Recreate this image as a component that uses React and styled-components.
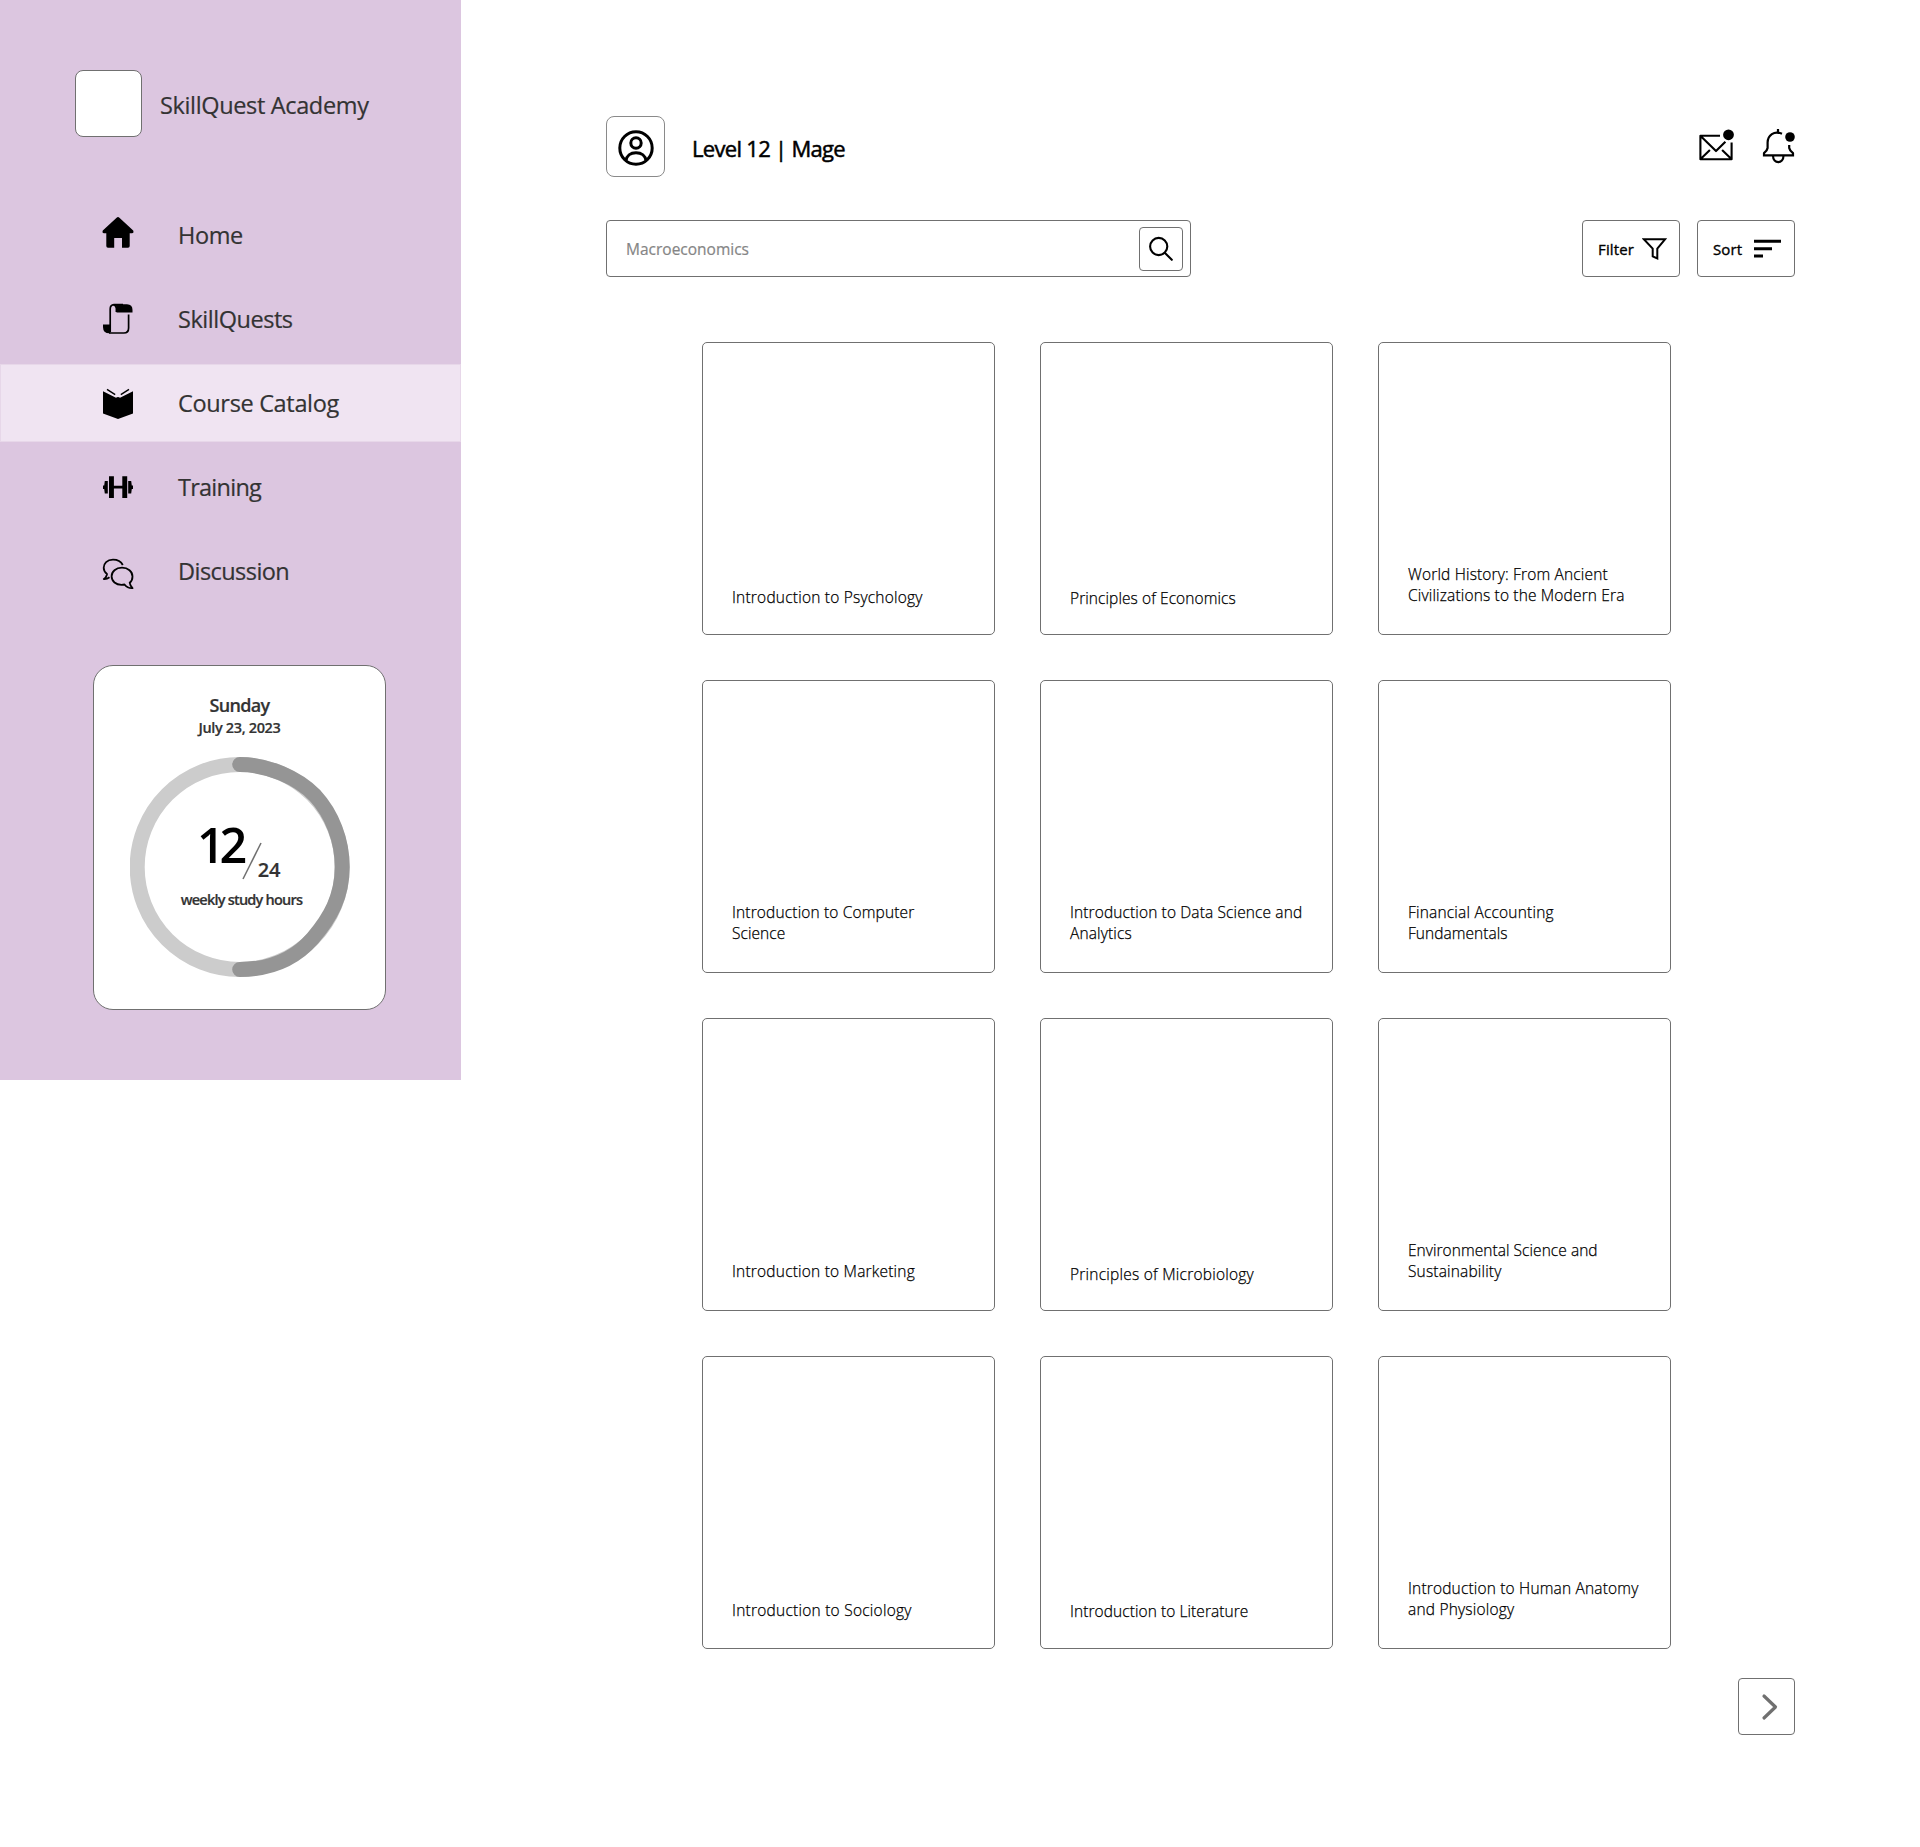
import React from "react";
import styled, { createGlobalStyle } from "styled-components";

const Global = createGlobalStyle`
  * { box-sizing: border-box; }
  body { margin: 0; background: #fff; font-family: "Open Sans", "Noto Sans", sans-serif; color: #000; }
  button { font: inherit; color: inherit; background: none; padding: 0; border: 0; }
  svg { display: block; flex: none; }
`;

const Page = styled.div`
  display: flex;
  align-items: flex-start;
  width: 1920px;
  height: 1847px;
`;
const Sidebar = styled.aside`
  width: 461px;
  height: 1080px;
  background: #dcc6e0;
  color: #333;
  padding-top: 70px;
`;
const Brand = styled.div`
  display: flex;
  align-items: center;
  gap: 18px;
  padding-left: 75px;
  height: 67px;
`;
const Logo = styled.div`
  width: 67px;
  height: 67px;
  border: 1px solid #707070;
  border-radius: 8px;
  background: #fff;
`;
const Text = styled.span`
  display: block;
  white-space: nowrap;
  font-size: ${(p) => p.$size}px;
  line-height: ${(p) => p.$line || 32}px;
  font-weight: ${(p) => p.$weight || 400};
  letter-spacing: ${(p) => p.$track || 0}px;
  color: ${(p) => p.$color || "inherit"};
  -webkit-text-stroke: ${(p) => p.$stroke || 0}px currentColor;
`;
const LoweredText = styled(Text)`
  padding-top: 2px;
`;
const Nav = styled.nav`
  display: flex;
  flex-direction: column;
  gap: 6px;
  margin-top: 59px;
`;
const NavItem = styled.a`
  display: flex;
  align-items: center;
  gap: 43px;
  height: 78px;
  padding-left: 100px;
  border: 1px solid ${(p) => (p.$active ? "#e7d7e9" : "transparent")};
  background: ${(p) => (p.$active ? "#f0e4f2" : "transparent")};
`;
const NavGlyph = styled.span`
  padding-top: ${(p) => Math.max(p.$drop, 0) * 2}px;
  padding-bottom: ${(p) => Math.max(-p.$drop, 0) * 2}px;
`;
const StudyCard = styled.section`
  display: flex;
  flex-direction: column;
  align-items: center;
  width: 293px;
  height: 345px;
  margin: 55px 0 0 93px;
  padding-top: 26px;
  background: #fff;
  border: 1px solid #707070;
  border-radius: 20px;
`;
const Ring = styled.div`
  display: grid;
  width: 220px;
  height: 220px;
  margin-top: 19px;
  > * { grid-area: 1 / 1; }
`;
const RingLabel = styled.div`
  display: flex;
  flex-direction: column;
  align-items: center;
  padding-top: 53px;
`;
const Fraction = styled.div`
  display: flex;
  align-items: flex-start;
  height: 79px;
  margin-right: 2px;
`;
const Slash = styled.svg`
  margin: 32px -4.5px 0 0;
`;
const Denominator = styled.div`
  padding-top: 46px;
`;
const RingCaption = styled(Text)`
  padding-left: 4px;
`;

const Main = styled.main`
  display: flex;
  flex-direction: column;
  width: 1189px;
  margin-left: 145px;
  padding-top: 116px;
`;
const Header = styled.header`
  display: flex;
  align-items: center;
  height: 61px;
`;
const Avatar = styled.div`
  display: grid;
  place-items: center;
  width: 59px;
  height: 61px;
  margin-right: 27px;
  padding-top: 2px;
  border: 1px solid #8a8a8a;
  border-radius: 8px;
`;
const Alerts = styled.div`
  display: flex;
  align-items: flex-start;
  gap: 27px;
  margin-left: auto;
  height: 36px;
`;
const Tools = styled.div`
  display: flex;
  gap: 17px;
  margin-top: 43px;
  height: 57px;
`;
const Search = styled.div`
  display: flex;
  align-items: center;
  justify-content: space-between;
  width: 585px;
  margin-right: auto;
  padding: 0 7px 0 19px;
  border: 1px solid #707070;
  border-radius: 4px;
`;
const SearchButton = styled.button`
  display: grid;
  place-items: center;
  width: 44px;
  height: 44px;
  margin-top: 1px;
  border: 1px solid #707070;
  border-radius: 4px;
`;
const ToolButton = styled.button`
  display: flex;
  align-items: center;
  justify-content: space-between;
  width: 98px;
  height: 57px;
  padding: 0 ${(p) => p.$right}px 0 15px;
  border: 1px solid #707070;
  border-radius: 4px;
`;
const Grid = styled.div`
  display: grid;
  grid-template-columns: repeat(3, 293px);
  grid-auto-rows: 293px;
  gap: 45px;
  margin: 65px 0 0 96px;
`;
const Course = styled.article`
  display: flex;
  flex-direction: column;
  justify-content: flex-end;
  padding: 0 0 ${(p) => p.$bottom}px 29px;
  border: 1px solid #707070;
  border-radius: 5px;
`;
const Next = styled.button`
  display: grid;
  place-items: center;
  align-self: flex-end;
  width: 57px;
  height: 57px;
  margin-top: 29px;
  padding-left: 7px;
  border: 1px solid #707070;
  border-radius: 4px;
`;

const HomeIcon = () => (
  <svg width="34" height="34" viewBox="0 0 34 34">
    <path d="M15.6 2.8 Q17 1.2 18.4 2.8 L32.2 15.6 Q33.2 18.2 31 18.2 H28.7 V31 Q28.7 32.8 27 32.8 H21 V23 H13.2 V32.8 H7 Q5.3 32.8 5.3 31 V18.2 H3 Q0.8 18.2 1.8 15.6 Z" />
  </svg>
);
const ScrollIcon = () => (
  <svg width="34" height="34" viewBox="0 0 34 34">
    <path d="M15.5 10.5 V6 Q15.5 3 12.5 2.2 H26 Q31.5 2.4 31.5 8 V10.5Z" />
    <path d="M2 22.5 H9.3 V31.3 Q2 31.8 2 25Z" />
    <path d="M9.2 30 V7 Q9.2 2.8 13 2.6 H22 M15.4 10 V6.5 Q15 3 12.5 2.8 M27.6 12.6 V26 Q27.6 31 22.8 31 H8" fill="none" stroke="#000" strokeWidth="1.7" />
  </svg>
);
const BookIcon = () => (
  <svg width="34" height="34" viewBox="0 0 34 34">
    <path d="M2 4.2 L15 10.8 Q17 9 19 10.8 L32 4.2 V26.5 L17 32 L2 26.5Z" />
    <path d="M6 2.4 L14.2 7.7 M28 2.4 L19.8 7.7" stroke="#000" strokeWidth="1.4" />
  </svg>
);
const DumbbellIcon = () => (
  <svg width="34" height="34" viewBox="0 0 34 34">
    <path d="M8 6.3h4.9v21.7H8zM21.3 6.3h4.9v21.7h-4.9zM12 15.8h10v2.7H12zM3.8 11h3v12.5h-3l-.6-4.4H2v-3.7h1.2zM30.2 11h-3v12.5h3l.6-4.4H32v-3.7h-1.2z" />
  </svg>
);
const ChatIcon = () => (
  <svg width="34" height="34" viewBox="0 0 34 34" fill="none" stroke="#000" strokeWidth="1.8" strokeLinejoin="round">
    <path d="M21.8 8 C20 4.5 16.5 2.7 12 2.7 C6 2.7 2.7 6.3 2.7 10.8 C2.7 13.5 4 15.5 6 17 L5.8 18 Q5 21 2.8 22 Q6 22.2 8.5 20.3" />
    <path d="M21 10.7 C14.8 10.7 10.6 14.5 10.6 19.2 C10.6 24.4 15 27.8 20.5 27.8 L23.5 27.5 Q26.5 31.5 31.5 31.2 Q29 28.6 28.7 25.7 C30.5 24.3 31.5 22 31.5 19.4 C31.5 14.5 27 10.7 21 10.7Z" />
  </svg>
);
const UserIcon = () => (
  <svg width="36" height="36" viewBox="0 0 36 36" fill="none" stroke="#000" strokeWidth="3">
    <circle cx="18" cy="18" r="16.2" />
    <circle cx="18" cy="13" r="5.2" />
    <path d="M8 30.5 C8.7 26 12.3 22.8 18 22.8 C23.7 22.8 27.3 26 28 30.5" />
  </svg>
);
const MailIcon = () => (
  <svg width="36" height="36" viewBox="0 0 36 36" fill="none" stroke="#000" strokeWidth="2.1" strokeLinejoin="round">
    <path d="M22 6.8 H2.4 V30.2 H33.6 V13.5 M2.6 7.1 L18 22.1 L27.4 12.7 M2.6 30 L11.9 21 M33.4 30 L24.1 21" />
    <circle cx="30.5" cy="5.8" r="5.4" fill="#000" stroke="none" />
  </svg>
);
const BellIcon = () => (
  <svg width="34" height="36" viewBox="0 0 34 36" fill="none" stroke="#000" strokeWidth="2.2">
    <path d="M21 4.8 C13 1.3 6.8 6.3 6.6 13.5 V19 Q6.3 21.4 3 24.2 V26.3 H32 V24.2 Q28.6 21.4 28.2 19 V16" />
    <path d="M17 0 V4 M12 26.5 C12 35.2 22.5 35.2 22.5 26.5" />
    <circle cx="29" cy="8" r="4.8" fill="#000" stroke="none" />
  </svg>
);
const SearchIcon = () => (
  <svg width="26" height="26" viewBox="0 0 26 26" fill="none" stroke="#000" strokeWidth="2.1" strokeLinecap="round">
    <circle cx="10.7" cy="10.5" r="8.6" />
    <path d="M17 17 L23.8 23.8" />
  </svg>
);
const FilterIcon = () => (
  <svg width="25" height="24" viewBox="0 0 25 24" fill="none" stroke="#000" strokeWidth="2">
    <path d="M1.8 2.2 H23.2 L15.3 11.6 V21.5 L10.7 19.3 V11.6Z" />
  </svg>
);
const SortIcon = () => (
  <svg width="27" height="22" viewBox="0 0 27 22">
    <path d="M0 1.8h27v3H0zM0 9.2h18v3H0zM0 16.6h9v2.9H0z" />
  </svg>
);

const NAV = [
  ["Home", HomeIcon, -0.4, -3],
  ["SkillQuests", ScrollIcon, -0.47, 0],
  ["Course Catalog", BookIcon, -0.33, 1],
  ["Training", DumbbellIcon, -0.75, 0],
  ["Discussion", ChatIcon, -0.55, 3],
];

const COURSES = [
  { lines: [["Introduction to Psychology", 0.21]], bottom: 26 },
  { lines: [["Principles of Economics", 0.08]], bottom: 25 },
  { lines: [["World History: From Ancient", 0.16], ["Civilizations to the Modern Era", 0.16]], bottom: 28 },
  { lines: [["Introduction to Computer", 0.15], ["Science", 0.07]], bottom: 28 },
  { lines: [["Introduction to Data Science and", 0.12], ["Analytics", 0.13]], bottom: 28 },
  { lines: [["Financial Accounting", 0.2], ["Fundamentals", 0.05]], bottom: 28 },
  { lines: [["Introduction to Marketing", 0.2]], bottom: 28 },
  { lines: [["Principles of Microbiology", 0.235]], bottom: 25 },
  { lines: [["Environmental Science and", 0.05], ["Sustainability", 0.17]], bottom: 28 },
  { lines: [["Introduction to Sociology", 0.24]], bottom: 27 },
  { lines: [["Introduction to Literature", 0.07]], bottom: 26 },
  { lines: [["Introduction to Human Anatomy", 0.17], ["and Physiology", 0.2]], bottom: 28 },
];

export default function App() {
  return (
    <Page>
      <Global />
      <Sidebar>
        <Brand>
          <Logo />
          <LoweredText $size={23.5} $track={-0.35} $stroke={0.2}>SkillQuest Academy</LoweredText>
        </Brand>
        <Nav>
          {NAV.map(([label, Icon, track, drop]) => (
            <NavItem key={label} $active={label === "Course Catalog"}>
              <NavGlyph $drop={drop}><Icon /></NavGlyph>
              <Text $size={23.5} $track={track} $stroke={0.2}>{label}</Text>
            </NavItem>
          ))}
        </Nav>
        <StudyCard>
          <Text $size={18} $weight={600} $line={26} $track={-0.7} $stroke={0.2}>Sunday</Text>
          <Text $size={14.5} $weight={600} $line={20} $track={-0.35} $stroke={0.2}>July 23, 2023</Text>
          <Ring>
            <svg width="220" height="220" viewBox="0 0 220 220" fill="none" strokeWidth="15">
              <circle cx="109.7" cy="110" r="102.5" stroke="#ccc" />
              <path d="M109.7 7.5 C138 7.5 168 21 185 38.5 C202 57 212.2 83 212.2 110 C212.2 140 200 161 183 181 C165 202 140 212.5 109.7 212.5" stroke="#959595" strokeLinecap="round" />
            </svg>
            <RingLabel>
              <Fraction>
                <Text $size={48.5} $weight={600} $line={68} $track={-5} $color="#000">12</Text>
                <Slash width="20" height="38" viewBox="0 0 20 38">
                  <path d="M19 1 L1 37" stroke="#707070" strokeWidth="1.5" />
                </Slash>
                <Denominator>
                  <Text $size={20} $weight={600} $line={28} $track={-0.3} $stroke={0.2}>24</Text>
                </Denominator>
              </Fraction>
              <RingCaption $size={14.5} $weight={600} $line={22} $track={-0.78} $stroke={0.2}>weekly study hours</RingCaption>
            </RingLabel>
          </Ring>
        </StudyCard>
      </Sidebar>
      <Main>
        <Header>
          <Avatar><UserIcon /></Avatar>
          <LoweredText $size={22} $track={-0.7} $stroke={0.5}>Level 12 | Mage</LoweredText>
          <Alerts>
            <MailIcon />
            <BellIcon />
          </Alerts>
        </Header>
        <Tools>
          <Search>
            <Text $size={15.5} $stroke={0.2} $color="#858585">Macroeconomics</Text>
            <SearchButton aria-label="Search"><SearchIcon /></SearchButton>
          </Search>
          <ToolButton $right={12}><Text $size={15} $track={0.15} $stroke={0.35}>Filter</Text><FilterIcon /></ToolButton>
          <ToolButton $right={13}><Text $size={15} $track={0.1} $stroke={0.35}>Sort</Text><SortIcon /></ToolButton>
        </Tools>
        <Grid>
          {COURSES.map(({ lines, bottom }) => (
            <Course key={lines[0][0]} $bottom={bottom}>
              {lines.map(([line, track]) => (
                <Text key={line} $size={15.5} $weight={300} $line={21} $track={track} $stroke={0.25}>{line}</Text>
              ))}
            </Course>
          ))}
        </Grid>
        <Next aria-label="Next page">
          <svg width="20" height="30" viewBox="0 0 20 30">
            <path d="M4 4 L15.5 15 L4 26" fill="none" stroke="#707070" strokeWidth="3.2" strokeLinecap="round" strokeLinejoin="round" />
          </svg>
        </Next>
      </Main>
    </Page>
  );
}
